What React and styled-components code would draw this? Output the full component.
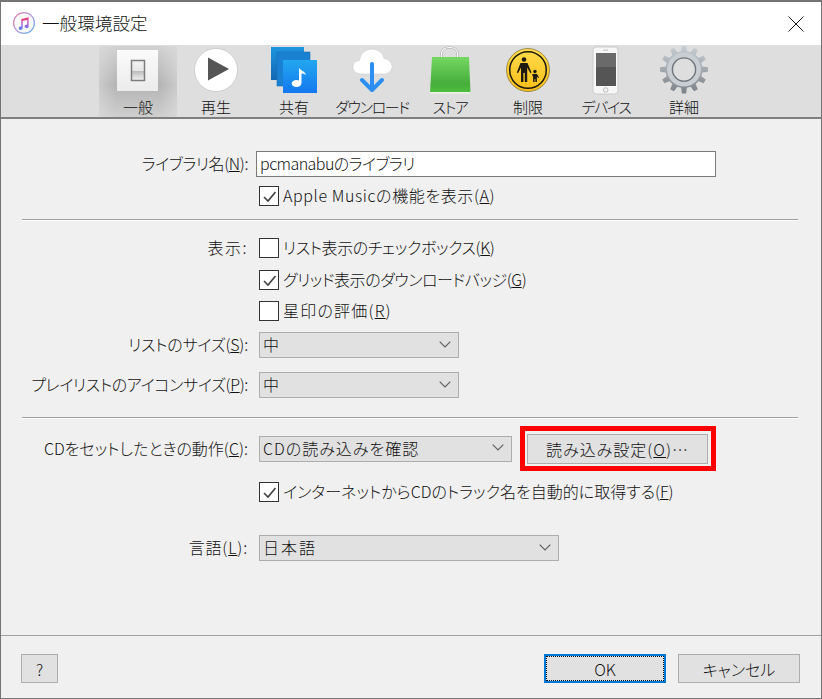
import React from "react";
import styled, { createGlobalStyle } from "styled-components";

const GlobalStyle = createGlobalStyle`
  html, body {
    margin: 0;
    padding: 0;
    background: #f0f0f0;
  }
  * {
    box-sizing: border-box;
  }
`;

// gear outline, 12 teeth
function gearPath(cx, cy, r1, r2) {
  const n = 12;
  let d = "";
  for (let i = 0; i < n; i++) {
    const a = (i / n) * Math.PI * 2 - Math.PI / 2;
    const w = (Math.PI * 2) / n;
    const pts = [
      [r1, a - w * 0.3],
      [r2, a - w * 0.17],
      [r2, a + w * 0.17],
      [r1, a + w * 0.3],
    ];
    pts.forEach(([r, t], j) => {
      const x = (cx + r * Math.cos(t)).toFixed(2);
      const y = (cy + r * Math.sin(t)).toFixed(2);
      d += `${i === 0 && j === 0 ? "M" : "L"}${x} ${y} `;
    });
  }
  return d + "Z";
}

const SwitchIcon = () => (
  <svg width="78" height="50">
    <defs>
      <linearGradient id="tile" x1="0" y1="0" x2="0" y2="1">
        <stop offset="0" stopColor="#fbfbfb" />
        <stop offset="1" stopColor="#ebebeb" />
      </linearGradient>
      <linearGradient id="rocker" x1="0" y1="0" x2="0" y2="1">
        <stop offset="0" stopColor="#f2f2f2" />
        <stop offset="0.5" stopColor="#e6e6e6" />
        <stop offset="0.55" stopColor="#bdbdbd" />
        <stop offset="1" stopColor="#f4f4f4" />
      </linearGradient>
    </defs>
    <rect x="18" y="4" width="41" height="41" fill="url(#tile)" />
    <rect x="32.5" y="14.5" width="13" height="20" fill="url(#rocker)" stroke="#7d7d7d" strokeWidth="1.5" />
  </svg>
);

const PlayIcon = () => (
  <svg width="78" height="50">
    <circle cx="39" cy="24" r="21.5" fill="#fff" stroke="#c9c9c9" strokeWidth="0.8" />
    <path d="M31 11.5 L52 23 L31 34.5 Z" fill="#555" />
  </svg>
);

const ShareIcon = () => (
  <svg width="78" height="50">
    <defs>
      <linearGradient id="shareFront" x1="0" y1="0" x2="0" y2="1">
        <stop offset="0" stopColor="#22a7f0" />
        <stop offset="1" stopColor="#1478f0" />
      </linearGradient>
      <linearGradient id="shareBack" x1="0" y1="0" x2="0" y2="1">
        <stop offset="0" stopColor="#1e96e0" />
        <stop offset="1" stopColor="#1466b0" />
      </linearGradient>
    </defs>
    <rect x="16" y="1" width="33" height="33" fill="url(#shareBack)" />
    <rect x="22" y="6" width="33" height="34" fill="#1a80d2" stroke="#1a6fb8" strokeWidth="0.6" />
    <rect x="28" y="14" width="34" height="33" fill="url(#shareFront)" />
    <ellipse cx="41.5" cy="37.5" rx="4.8" ry="3.6" fill="#fff" />
    <path d="M44 37 V22 C46 25 50 25 51 29 C49 27.5 47.5 27.5 46.5 27.5 V37 Z" fill="#fff" />
  </svg>
);

const DownloadIcon = () => (
  <svg width="78" height="50">
    <path
      d="M28 28 C22 28 20 24 20 21 C20 17 23 14.5 26.5 14.5 C27.5 7 33 3 39 3 C45.5 3 50 7.5 51 12.5 C55.5 13 59 16.5 59 20.5 C59 25 55.5 28 51 28 Z"
      fill="#fff"
      stroke="#cfcfcf"
      strokeWidth="0.6"
    />
    <path d="M39 18 V44 M29 34 L39 44 L49 34" fill="none" stroke="#2b8ef0" strokeWidth="4" strokeLinecap="round" strokeLinejoin="round" />
  </svg>
);

const StoreIcon = () => (
  <svg width="78" height="50">
    <defs>
      <linearGradient id="bag" x1="0" y1="0" x2="0" y2="1">
        <stop offset="0" stopColor="#74d862" />
        <stop offset="0.75" stopColor="#46ad3a" />
        <stop offset="1" stopColor="#4fc03f" />
      </linearGradient>
    </defs>
    <path d="M30.5 12 V8 C30.5 3.5 34 1.5 38.5 1.5 C43 1.5 46.5 3.5 46.5 8 V12" fill="none" stroke="#a9a9a9" strokeWidth="2.2" />
    <path d="M30.5 12 V8 C30.5 3.5 34 1.5 38.5 1.5 C43 1.5 46.5 3.5 46.5 8 V12" fill="none" stroke="#fff" strokeWidth="1.1" />
    <path d="M21 11 H58 L59.5 47 H19 Z" fill="url(#bag)" />
    <rect x="19" y="46" width="40.5" height="1.5" fill="#e9f3e6" />
  </svg>
);

const RestrictIcon = () => (
  <svg width="78" height="50">
    <defs>
      <linearGradient id="sign" x1="0" y1="0" x2="0" y2="1">
        <stop offset="0" stopColor="#ffdc4a" />
        <stop offset="1" stopColor="#f8bd17" />
      </linearGradient>
    </defs>
    <circle cx="39" cy="24" r="21.5" fill="url(#sign)" stroke="#8a7a3a" strokeWidth="0.8" />
    <circle cx="39" cy="24" r="18.3" fill="none" stroke="#1d1a10" strokeWidth="1.5" />
    <circle cx="35" cy="13.5" r="2.3" fill="#1d1a10" />
    <path d="M31.5 17 H38.5 L42.5 26.5 L41.4 27.2 L38.2 21.5 V36 H35.8 V27 H34.4 V36 H32 V21.5 L29 27.2 L27.8 26.5 Z" fill="#1d1a10" />
    <circle cx="46" cy="25.5" r="1.7" fill="#1d1a10" />
    <path d="M44 28 H48 L50 31.5 L49.1 32.1 L47.9 30.6 V36 H46.4 V33 H45.6 V36 H44.1 V30.6 L42.9 28.8 Z" fill="#1d1a10" />
  </svg>
);

const DeviceIcon = () => (
  <svg width="78" height="50">
    <rect x="26" y="1" width="25" height="47" rx="3.5" fill="#f6f6f6" stroke="#c4c4c4" strokeWidth="0.8" />
    <rect x="29" y="7" width="20" height="33" fill="#555" />
    <rect x="29" y="7" width="20" height="14" fill="#6a6a6a" />
    <rect x="36" y="3.6" width="5" height="1" fill="#bdbdbd" />
    <circle cx="38.7" cy="44" r="2.3" fill="#f0f0f0" stroke="#b4b4b4" strokeWidth="0.8" />
  </svg>
);

const GearIcon = () => (
  <svg width="78" height="50">
    <defs>
      <linearGradient id="gear" x1="0" y1="0" x2="0" y2="1">
        <stop offset="0" stopColor="#c6ced4" />
        <stop offset="1" stopColor="#7c8288" />
      </linearGradient>
    </defs>
    <path d={gearPath(39, 23.5, 18.5, 24)} fill="url(#gear)" />
    <circle cx="39" cy="23.5" r="14.5" fill="none" stroke="#c9ced2" strokeWidth="5" />
    <circle cx="39" cy="23.5" r="11.6" fill="#dedede" stroke="#6f757a" strokeWidth="1.4" />
  </svg>
);

const ITunesIcon = () => (
  <svg width="24" height="24" viewBox="0 0 24 24">
    <defs>
      <linearGradient id="itRing" x1="0" y1="0" x2="1" y2="1">
        <stop offset="0" stopColor="#e87fa8" />
        <stop offset="0.5" stopColor="#b79ae0" />
        <stop offset="1" stopColor="#55b5ea" />
      </linearGradient>
      <linearGradient id="itNote" x1="0" y1="0" x2="0" y2="1">
        <stop offset="0" stopColor="#f4406a" />
        <stop offset="0.6" stopColor="#a65ce0" />
        <stop offset="1" stopColor="#4f8ff0" />
      </linearGradient>
    </defs>
    <circle cx="12" cy="12" r="10.4" fill="#fafafa" stroke="url(#itRing)" strokeWidth="1.3" />
    <path
      d="M9.3 8 L16.6 6.2 V15.4 A2 1.7 0 1 1 15.2 13.8 V9 L10.7 10.1 V17.2 A2 1.7 0 1 1 9.3 15.6 Z"
      fill="url(#itNote)"
    />
  </svg>
);

const CloseIcon = () => (
  <svg width="16" height="16" viewBox="0 0 16 16">
    <path d="M0.5 0.5 L15.5 15.5 M15.5 0.5 L0.5 15.5" stroke="#1a1a1a" strokeWidth="1" fill="none" />
  </svg>
);

const Chevron = () => (
  <svg width="12" height="7" viewBox="0 0 12 7">
    <path d="M0.7 0.7 L6 6 L11.3 0.7" stroke="#606060" strokeWidth="1.2" fill="none" />
  </svg>
);

const CheckMark = () => (
  <svg width="17" height="17" viewBox="0 0 17 17">
    <path d="M3 9 L7 13 L14.5 4" stroke="#404040" strokeWidth="1.6" fill="none" />
  </svg>
);

const tools = [
  { label: "一般", icon: <SwitchIcon />, active: true },
  { label: "再生", icon: <PlayIcon /> },
  { label: "共有", icon: <ShareIcon /> },
  { label: "ダウンロード", icon: <DownloadIcon />, kana: true },
  { label: "ストア", icon: <StoreIcon />, kana: true },
  { label: "制限", icon: <RestrictIcon /> },
  { label: "デバイス", icon: <DeviceIcon />, kana: true },
  { label: "詳細", icon: <GearIcon /> },
];

export default function App() {
  return (
    <>
      <GlobalStyle />
      <Window>
        <TitleBar>
          <ITunesIcon />
          <Title>一般環境設定</Title>
          <CloseButton>
            <CloseIcon />
          </CloseButton>
        </TitleBar>

        <Toolbar>
          {tools.map((t) => (
            <ToolItem key={t.label} $active={t.active}>
              <ToolIcon>{t.icon}</ToolIcon>
              <ToolLabel $kana={t.kana}>{t.label}</ToolLabel>
            </ToolItem>
          ))}
        </Toolbar>

        <Form>
          <Row $top={32}>
            <Label $track={-0.4}>
              ライブラリ名(<u>N</u>):
            </Label>
            <TextInput>pcmanabuのライブラリ</TextInput>
          </Row>
          <CheckRow $top={9} $track={0.6} checked>
            Apple Musicの機能を表示(<u>A</u>)
          </CheckRow>
          <Divider $top={13} />

          <CheckRow $top={18} $track={-0.4} label="表示:" labelTrack={1.5}>
            リスト表示のチェックボックス(<u>K</u>)
          </CheckRow>
          <CheckRow $top={12} $track={-0.45} checked>
            グリッド表示のダウンロードバッジ(<u>G</u>)
          </CheckRow>
          <CheckRow $top={11} $track={1.2}>
            星印の評価(<u>R</u>)
          </CheckRow>
          <Row $top={11}>
            <Label $track={-0.2}>
              リストのサイズ(<u>S</u>):
            </Label>
            <Select $width={200}>
              中
              <Chevron />
            </Select>
          </Row>
          <Row $top={14}>
            <Label $track={-0.35}>
              プレイリストのアイコンサイズ(<u>P</u>):
            </Label>
            <Select $width={200}>
              中
              <Chevron />
            </Select>
          </Row>
          <Divider $top={19} />

          <Row $top={17}>
            <Label>
              CDをセットしたときの動作(<u>C</u>):
            </Label>
            <Select $width={253} $track={1}>
              CDの読み込みを確認
              <Chevron />
            </Select>
            <Highlight>
              <ImportButton>
                読み込み設定(<u>O</u>)…
              </ImportButton>
            </Highlight>
          </Row>
          <CheckRow $top={20} checked>
            インターネットからCDのトラック名を自動的に取得する(<u>F</u>)
          </CheckRow>
          <Row $top={33}>
            <Label $track={0.8}>
              言語(<u>L</u>):
            </Label>
            <Select $width={300} $track={2}>
              日本語
              <Chevron />
            </Select>
          </Row>
        </Form>

        <Footer>
          <HelpButton>?</HelpButton>
          <FooterRight>
            <OkButton>
              <OkInner>OK</OkInner>
            </OkButton>
            <DialogButton>キャンセル</DialogButton>
          </FooterRight>
        </Footer>
      </Window>
    </>
  );
}

function CheckRow({ $top, $track, label, labelTrack, checked, children }) {
  return (
    <Row $top={$top}>
      <Label $track={labelTrack}>{label}</Label>
      <CheckLabel>
        <Box>{checked && <CheckMark />}</Box>
        <CheckText $track={$track}>{children}</CheckText>
      </CheckLabel>
    </Row>
  );
}

const Window = styled.div`
  width: 822px;
  height: 699px;
  display: flex;
  flex-direction: column;
  background: #f0f0f0;
  border: 1px solid #747474;
  border-top-width: 2px;
  font-family: "Noto Sans CJK JP", "Noto Sans", sans-serif;
  font-weight: 300;
  font-size: 16px;
  font-feature-settings: "palt";
  color: #111;
  overflow: hidden;
`;

const TitleBar = styled.div`
  height: 43px;
  flex: none;
  display: flex;
  align-items: center;
  padding: 0 17px 2px 11px;
  background: #fff;
`;

const Title = styled.div`
  margin-left: 6px;
  font-size: 17.6px;
  flex: 1;
`;

const CloseButton = styled.div`
  display: flex;
  margin-top: 2px;
`;

const Toolbar = styled.div`
  height: 74px;
  flex: none;
  display: flex;
  padding: 1px 0 0 98px;
  background: #dedede;
  border-bottom: 2px solid #7f7f7f;
`;

const ToolItem = styled.div`
  width: 78px;
  display: flex;
  flex-direction: column;
  align-items: center;
  background: ${(p) =>
    p.$active
      ? "linear-gradient(to right, rgba(222,222,222,.55), rgba(222,222,222,0) 22%, rgba(222,222,222,0) 78%, rgba(222,222,222,.55)), linear-gradient(#d2d2d2, #b4b4b4 55%, #cfcfcf)"
      : "none"};
`;

const ToolIcon = styled.div`
  height: 50px;
  display: flex;
`;

const ToolLabel = styled.div`
  font-size: 15px;
  line-height: 20px;
  margin-top: 1px;
  white-space: nowrap;
  letter-spacing: ${(p) => (p.$kana ? "-1.4px" : "0")};
`;

const Form = styled.div`
  flex: 1;
  padding: 0 23px 0 21px;
`;

const Row = styled.div`
  display: flex;
  align-items: center;
  margin-top: ${(p) => p.$top}px;
  min-height: 20px;
`;

const Label = styled.div`
  width: 226px;
  flex: none;
  margin-right: 11px;
  padding-bottom: 2px;
  text-align: right;
  white-space: nowrap;
  line-height: 18px;
  letter-spacing: ${(p) => p.$track || 0}px;
`;

const TextInput = styled.div`
  width: 460px;
  height: 26px;
  margin-left: -3px;
  padding: 0 0 2px 3px;
  display: flex;
  align-items: center;
  background: #fff;
  border: 1px solid #7a7a7a;
  letter-spacing: -0.55px;
`;

const CheckLabel = styled.div`
  display: flex;
  align-items: center;
  gap: 4px;
  white-space: nowrap;
  line-height: 18px;
`;

const CheckText = styled.span`
  padding-bottom: 2px;
  letter-spacing: ${(p) => p.$track || 0}px;
`;

const Box = styled.div`
  width: 20px;
  height: 20px;
  display: flex;
  align-items: center;
  justify-content: center;
  background: #fff;
  border: 1px solid #333;
`;

const Select = styled.div`
  width: ${(p) => p.$width}px;
  height: 26px;
  flex: none;
  padding: 0 7px 2px 3px;
  display: flex;
  align-items: center;
  justify-content: space-between;
  background: #e1e1e1;
  border: 1px solid #adadad;
  white-space: nowrap;
  letter-spacing: ${(p) => p.$track || 0}px;
`;

const Highlight = styled.div`
  width: 196px;
  height: 45px;
  margin: -9px 0 -9px 8px;
  flex: none;
  padding: 3px 3px 2px 2px;
  border: 5px solid #ff0000;
  display: flex;
`;

const DialogButton = styled.div`
  width: 122px;
  height: 29px;
  display: flex;
  align-items: center;
  justify-content: center;
  background: #e1e1e1;
  border: 1px solid #adadad;
`;

const ImportButton = styled(DialogButton)`
  width: 100%;
  height: 100%;
  letter-spacing: 1px;
`;

const Divider = styled.div`
  height: 1px;
  margin-top: ${(p) => p.$top}px;
  background: #a0a0a0;
  box-shadow: 0 1px 0 #fff;
`;

const Footer = styled.div`
  height: 63px;
  flex: none;
  display: flex;
  justify-content: space-between;
  padding: 18px 21px 0 20px;
  border-top: 1px solid #a0a0a0;
`;

const FooterRight = styled.div`
  display: flex;
  gap: 12px;
`;

const HelpButton = styled(DialogButton)`
  width: 37px;
`;

const OkButton = styled(DialogButton)`
  border: 2px solid #0078d7;
  padding: 0;
`;

const OkInner = styled.div`
  width: 100%;
  height: 100%;
  display: flex;
  align-items: center;
  justify-content: center;
  border: 1px dotted #111;
`;
